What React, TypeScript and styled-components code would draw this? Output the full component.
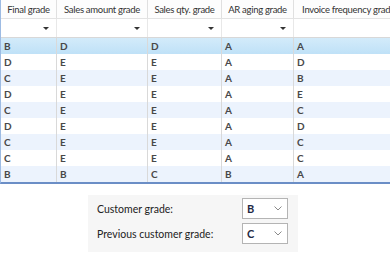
import styled, { createGlobalStyle } from "styled-components";

const GlobalStyle = createGlobalStyle`
  html, body {
    margin: 0;
    padding: 0;
    background: #ffffff;
  }
  #root {
    width: 390px;
    height: 260px;
    overflow: hidden;
    font-family: Lato, "Noto Sans", sans-serif;
    color: #2b2b2b;
  }
`;

type TColumn = {
  title: string;
  width: number;
};

const COLUMNS: TColumn[] = [
  { title: "Final grade", width: 56 },
  { title: "Sales amount grade", width: 91 },
  { title: "Sales qty. grade", width: 74 },
  { title: "AR aging grade", width: 72 },
  { title: "Invoice frequency grade", width: 110 },
];

const ROWS: string[][] = [
  ["B", "D", "D", "A", "A"],
  ["D", "E", "E", "A", "D"],
  ["C", "E", "E", "A", "B"],
  ["D", "E", "E", "A", "E"],
  ["C", "E", "E", "A", "C"],
  ["D", "E", "E", "A", "D"],
  ["C", "E", "E", "A", "C"],
  ["C", "E", "E", "A", "C"],
  ["B", "B", "C", "B", "A"],
];

const template = COLUMNS.map((c) => `${c.width}px`).join(" ");

const App = () => {
  return (
    <>
      <GlobalStyle />
      <Grid>
        <HeaderRow>
          {COLUMNS.map((c) => (
            <HeaderCell key={c.title}>{c.title}</HeaderCell>
          ))}
        </HeaderRow>
        <FilterRow>
          {COLUMNS.map((c) => (
            <FilterCell key={c.title}>
              <Caret />
            </FilterCell>
          ))}
        </FilterRow>
        {ROWS.map((row, i) => (
          <DataRow key={i} $selected={i === 0} $alt={i % 2 === 0}>
            {row.map((v, j) => (
              <DataCell key={j}>{v}</DataCell>
            ))}
          </DataRow>
        ))}
      </Grid>

      <Panel>
        <FieldRow>
          <FieldLabel>Customer grade:</FieldLabel>
          <Combo>
            <ComboValue>B</ComboValue>
            <Chevron />
          </Combo>
        </FieldRow>
        <FieldRow>
          <FieldLabel>Previous customer grade:</FieldLabel>
          <Combo>
            <ComboValue>C</ComboValue>
            <Chevron />
          </Combo>
        </FieldRow>
      </Panel>
    </>
  );
};

export default App;

const Chevron = () => (
  <svg width="8" height="5" viewBox="0 0 8 5">
    <path d="M0.5 0.5 L4 4 L7.5 0.5" fill="none" stroke="#8a8a8a" strokeWidth="1" />
  </svg>
);

const Grid = styled.div`
  width: 403px;
  border-left: 1px solid #9dbbe3;
  border-bottom: 2px solid #6b8ec6;
  font-size: 10px;
`;

const RowBase = styled.div`
  display: grid;
  grid-template-columns: ${template};
`;

const HeaderRow = styled(RowBase)`
  height: 18px;
  background: #fdfdfd;
  border-bottom: 1px solid #e3e3e3;
`;

const HeaderCell = styled.div`
  display: flex;
  align-items: center;
  justify-content: center;
  border-right: 1px solid #e0e0e0;
  white-space: nowrap;
  overflow: hidden;
  font-size: 9.5px;
  letter-spacing: -0.3px;
  color: #333333;
`;

const FilterRow = styled(RowBase)`
  height: 18px;
  background: #ffffff;
  border-bottom: 1px solid #d8d8d8;
`;

const FilterCell = styled.div`
  display: flex;
  align-items: center;
  justify-content: flex-end;
  padding-right: 7px;
  border-right: 1px solid #e8e8e8;
`;

const Caret = styled.span`
  width: 0;
  height: 0;
  border-left: 3px solid transparent;
  border-right: 3px solid transparent;
  border-top: 3px solid #333333;
`;

const DataRow = styled(RowBase)<{ $selected: boolean; $alt: boolean }>`
  height: 16px;
  background: ${({ $selected, $alt }) =>
    $selected
      ? "linear-gradient(#d3ebfa, #bfe1f7)"
      : $alt
      ? "#ecf3fd"
      : "#ffffff"};
`;

const DataCell = styled.div`
  display: flex;
  align-items: center;
  padding-left: 3px;
  border-right: 1px solid #d9d9d9;
  font-weight: 700;
  color: #484848;
`;

const Panel = styled.div`
  width: 210px;
  margin: 11px 0 0 88px;
  padding: 3px 0 8px 9px;
  background: #f6f6f6;
  box-sizing: border-box;
  display: flex;
  flex-direction: column;
  gap: 4px;
`;

const FieldRow = styled.div`
  display: grid;
  grid-template-columns: 145px 46px;
  align-items: center;
`;

const FieldLabel = styled.span`
  font-size: 10.5px;
  color: #222222;
`;

const Combo = styled.div`
  height: 21px;
  box-sizing: border-box;
  border: 1px solid #b4b4b4;
  background: #ffffff;
  display: flex;
  align-items: center;
  justify-content: space-between;
  padding: 0 5px 0 4px;
`;

const ComboValue = styled.span`
  font-size: 11px;
  font-weight: 700;
  color: #1f2a44;
`;
